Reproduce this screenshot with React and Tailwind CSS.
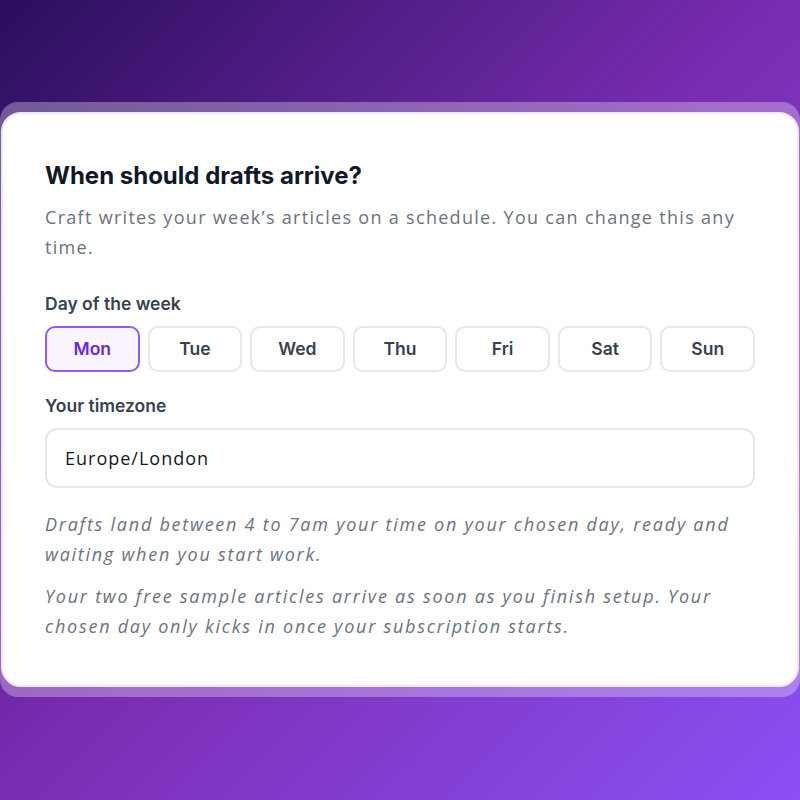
import { useState } from 'react';

const days = ['Mon', 'Tue', 'Wed', 'Thu', 'Fri', 'Sat', 'Sun'];

export default function App() {
  const [day, setDay] = useState('Mon');
  const [tz, setTz] = useState('Europe/London');

  return (
    <div className="h-[800px] w-full overflow-hidden bg-[linear-gradient(135deg,#2a0e5d_0%,#7a2db2_50%,#8c50f4_100%)] pt-[102px]">
      {/* translucent frame around the card */}
      <div className="rounded-[18px] bg-white/30 px-[1px] py-[10px]">
        <div className="rounded-[20px] border-2 border-[#efe6ff] bg-white pl-[42px] pr-[42px] pt-[47px] pb-[44px]" style={{ fontFamily: '"Open Sans", sans-serif' }}>
          <h2 className="text-[24px] font-bold leading-[30px] text-[#111827]" style={{ fontFamily: 'Inter, sans-serif' }}>
            When should drafts arrive?
          </h2>
          <p className="mt-[11px] text-[18px] leading-[30px] tracking-[1.3px] text-[#6b7280]">
            Craft writes your week’s articles on a schedule. You can change this any time.
          </p>

          <div className="mt-[30px]" style={{ fontFamily: 'Inter, sans-serif' }}>
            <label className="block text-[17.5px] font-semibold leading-[24px] text-[#374151]">Day of the week</label>
            <div className="mt-[10px] grid grid-cols-7 gap-[8px]">
              {days.map(d => (
                <button
                  key={d}
                  type="button"
                  onClick={() => setDay(d)}
                  className={`h-[46px] rounded-[10px] text-[17.5px] font-semibold ${day === d ? 'border-2 border-[#8b5cf6] bg-[#faf5ff] text-[#6d28d9]' : 'border-2 border-[#e5e7eb] bg-white text-[#374151]'}`}
                >
                  {d}
                </button>
              ))}
            </div>
          </div>

          <div className="mt-[22px]">
            <label className="block text-[17.5px] font-semibold leading-[24px] text-[#374151]" style={{ fontFamily: 'Inter, sans-serif' }}>Your timezone</label>
            <input
              value={tz}
              onChange={e => setTz(e.target.value)}
              className="mt-[10px] h-[60px] w-full rounded-[12px] border-2 border-[#e5e7eb] px-[18px] text-[18px] tracking-[1px] text-[#111827] outline-none"
            />
          </div>

          <div className="mt-[21px] space-y-[12px] text-[18px] italic leading-[30px] tracking-[1.75px] text-[#6b7280]">
            <p>Drafts land between 4 to 7am your time on your chosen day, ready and waiting when you start work.</p>
            <p>Your two free sample articles arrive as soon as you finish setup. Your chosen day only kicks in once your subscription starts.</p>
          </div>
        </div>
      </div>
    </div>
  );
}
